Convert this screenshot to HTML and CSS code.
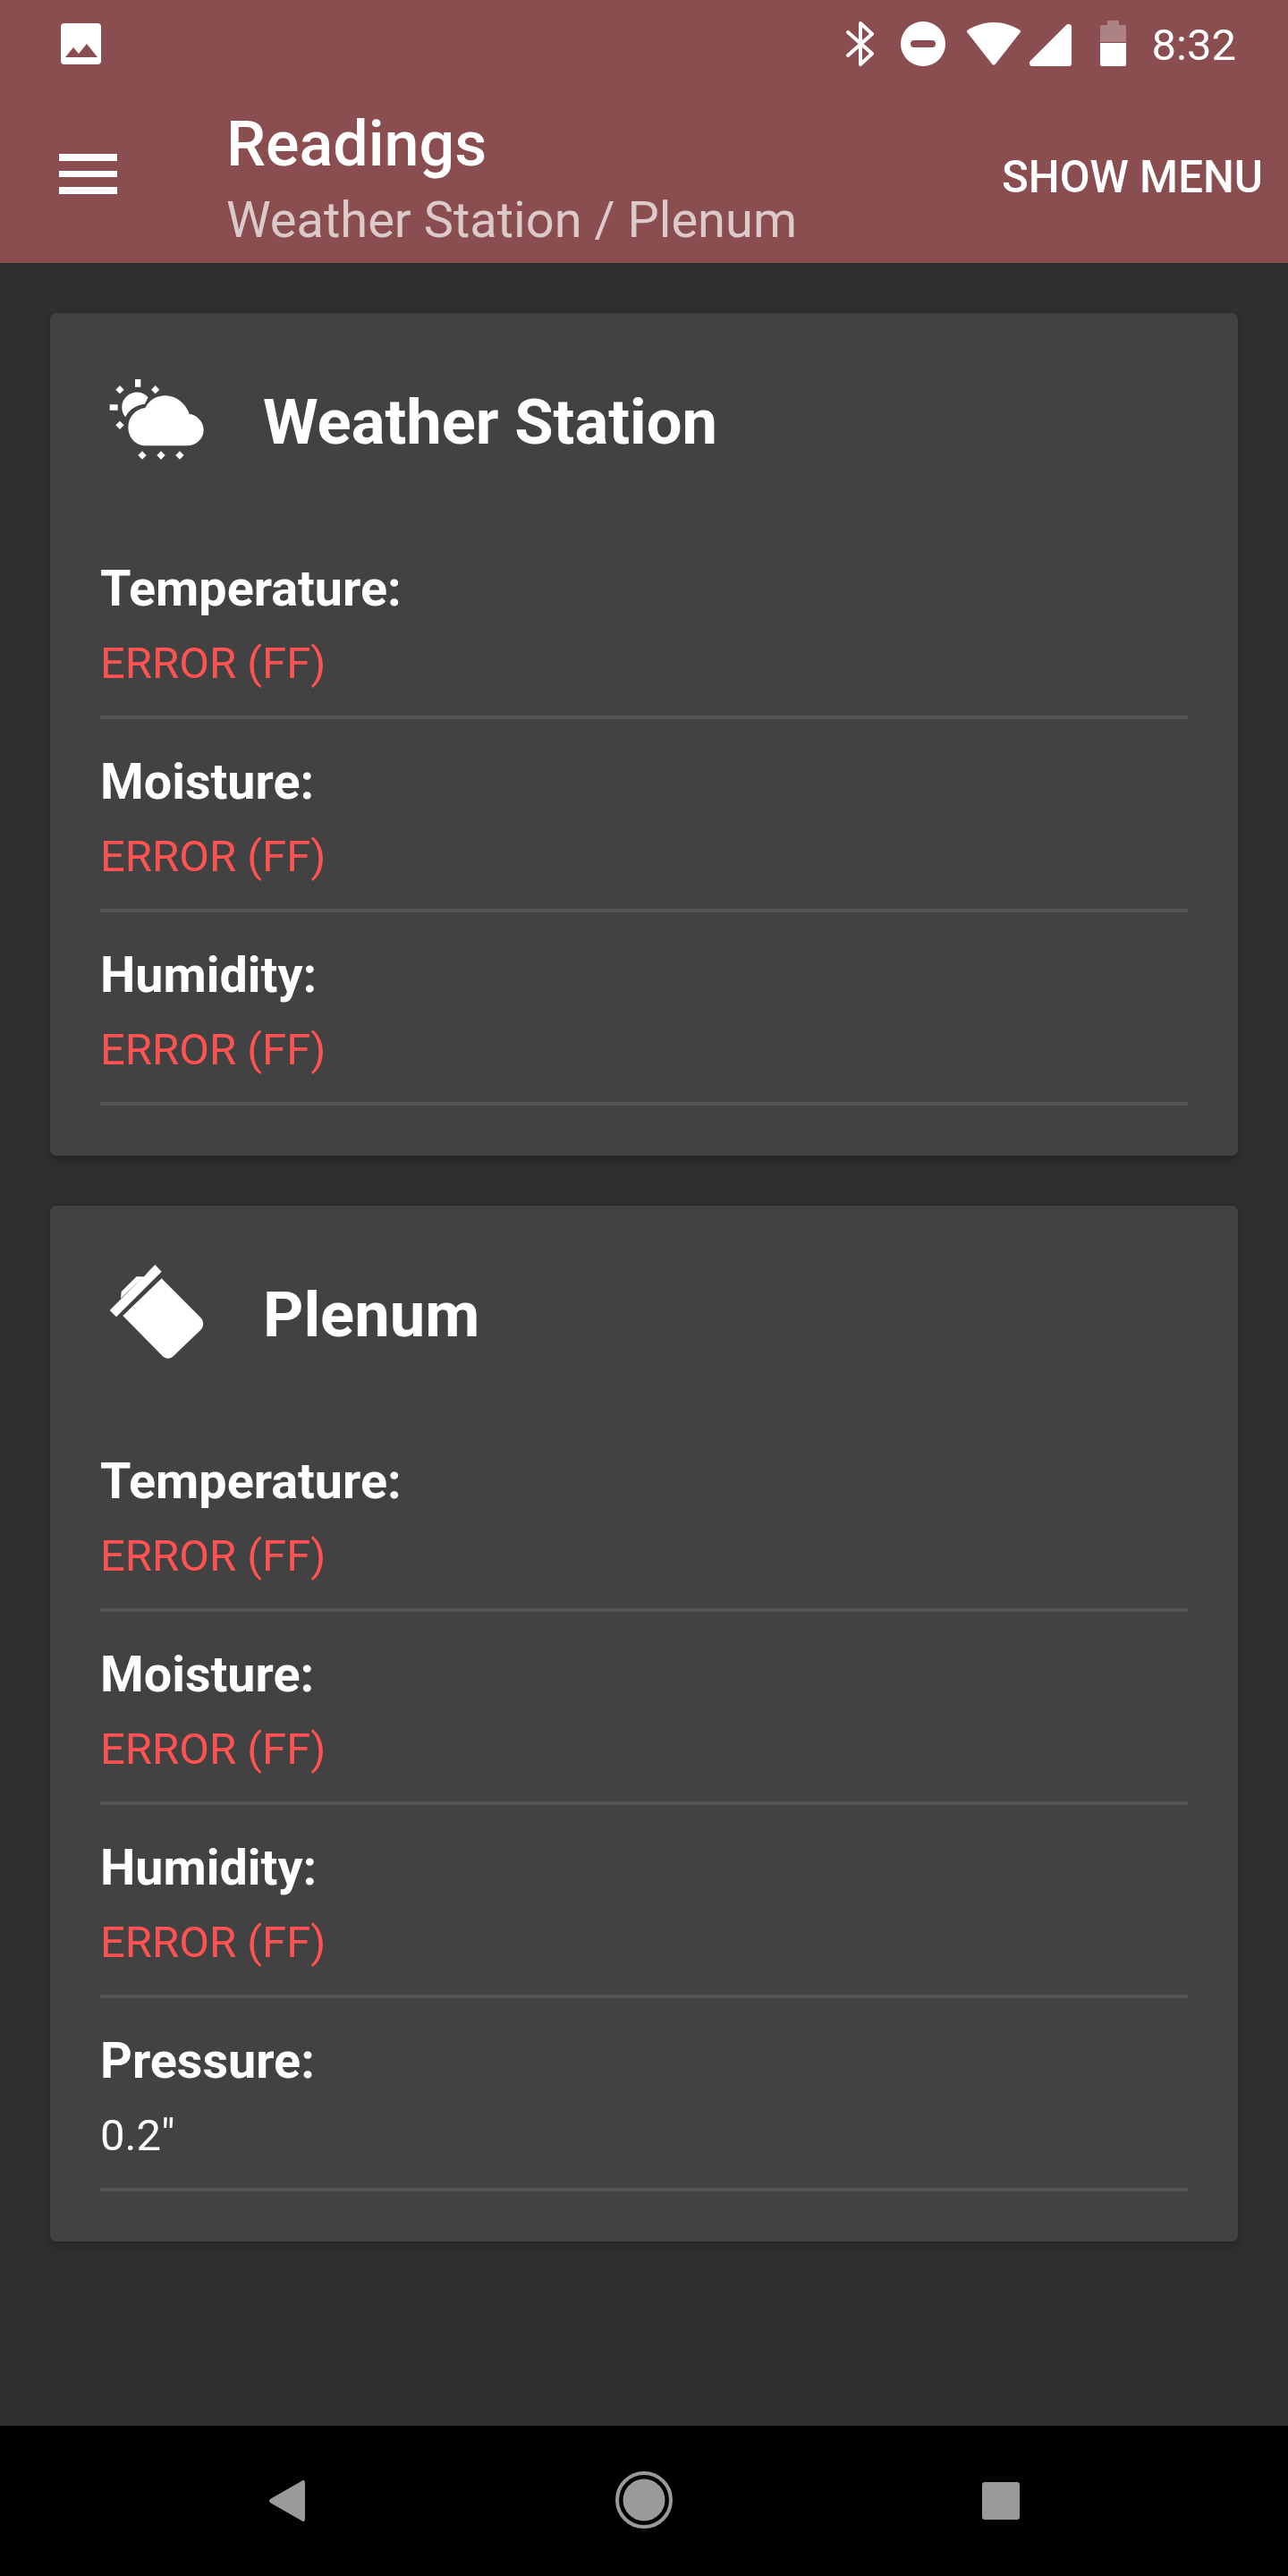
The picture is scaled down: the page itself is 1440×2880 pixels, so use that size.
FILE: index.html
```html
<!DOCTYPE html>
<html lang="en">
<head>
<meta charset="utf-8">
<title>Readings</title>
<link rel="stylesheet" href="styles.css">
</head>
<body>
<div class="screen">
  <header class="appbar">
    <div class="status">
      <svg class="ic-image" viewBox="0 0 45 46"><path fill-rule="evenodd" fill="#fff" d="M4 0H41A4 4 0 0 1 45 4V42A4 4 0 0 1 41 46H4A4 4 0 0 1 0 42V4A4 4 0 0 1 4 0ZM5 38H41L29 23 20 34 14 27Z"/></svg>
      <div class="status-right">
        <svg class="ic-bt" viewBox="0 0 31 50"><path fill="none" stroke="#fff" stroke-width="4" stroke-linecap="round" stroke-linejoin="round" d="M2 12L29 36 16 48V2L29 14 2 38"/></svg>
        <svg class="ic-dnd" viewBox="0 0 50 50"><path fill-rule="evenodd" fill="#fff" d="M25 0A25 25 0 1 1 25 50 25 25 0 0 1 25 0ZM15 21A4 4 0 0 0 15 29H35A4 4 0 0 0 35 21Z"/></svg>
        <svg class="ic-wifi" viewBox="0 0 60 49"><path fill="#fff" d="M1 13C-.5 12 -.3 10 1 9.500C10 4 20 1 30 1S50 4 59 9.500C60.300 10 60.500 12 59 13L32 47.500C31 49 29 49 28 47.500Z"/></svg>
        <svg class="ic-signal" viewBox="0 0 47 47"><path fill="#fff" d="M1 41L41 1C43 -1 47 0 47 3V44C47 46 46 47 44 47H3C0 47 -1 43 1 41Z"/></svg>
        <svg class="ic-batt" viewBox="0 0 29 51"><path fill="#fff" fill-opacity=".3" d="M8 0H21V5H27A2 2 0 0 1 29 7V24H0V7A2 2 0 0 1 2 5H8Z"/><path fill="#fff" d="M0 25H29V49A2 2 0 0 1 27 51H2A2 2 0 0 1 0 49Z"/></svg>
        <span class="clock">8:32</span>
      </div>
    </div>
    <div class="toolbar">
      <div class="burger"><span></span><span></span><span></span></div>
      <div class="titles">
        <div class="title">Readings</div>
        <div class="subtitle">Weather Station / Plenum</div>
      </div>
      <div class="action">SHOW MENU</div>
    </div>
  </header>

  <main class="content">
    <section class="card">
      <div class="card-head">
        <svg class="card-icon" viewBox="36 -12 378 378"><path fill="#fff" d="M190 265H325C360 265 383 240 383 212C383 185 362 162 335 158C322 122 290 97 255 97C225 97 200 112 187 138C155 142 130 168 130 203C130 237 155 265 190 265Z"/><path fill="#fff" d="M197 103A50 50 0 0 0 121 169C128 150 150 130 185 125Z"/><path fill="#fff" d="M153 42H172V68H153ZM68 127H95V146H68ZM102 63L116 77 102 91 88 77ZM221 63L235 77 221 91 207 77ZM102 182L116 196 102 210 88 196ZM177 283L191 297 177 311 163 297ZM240 283L254 297 240 311 226 297ZM303 283L317 297 303 311 289 297Z"/></svg>
        <h2 class="card-title">Weather Station</h2>
      </div>
      <div class="row"><div class="label">Temperature:</div><div class="value error">ERROR (FF)</div></div>
      <div class="row"><div class="label">Moisture:</div><div class="value error">ERROR (FF)</div></div>
      <div class="row"><div class="label">Humidity:</div><div class="value error">ERROR (FF)</div></div>
    </section>

    <section class="card">
      <div class="card-head">
        <svg class="card-icon" viewBox="36 12 378 378"><path fill="#fff" d="M220 42L242 65 90 217 68 195ZM105 155L107 132 158 82H183L205 58Z"/><path fill="#fff" d="M242 88L372 218C385 231 385 249 372 262L285 345C272 360 255 360 242 345L112 213Z"/></svg>
        <h2 class="card-title">Plenum</h2>
      </div>
      <div class="row"><div class="label">Temperature:</div><div class="value error">ERROR (FF)</div></div>
      <div class="row"><div class="label">Moisture:</div><div class="value error">ERROR (FF)</div></div>
      <div class="row"><div class="label">Humidity:</div><div class="value error">ERROR (FF)</div></div>
      <div class="row"><div class="label">Pressure:</div><div class="value">0.2"</div></div>
    </section>
  </main>

  <nav class="navbar">
    <svg class="nav-back" viewBox="0 0 40 46"><path fill="#9a9a9a" d="M36 1C38 -1 40 0 40 3V43C40 46 38 47 36 45L1 25C-.3 24 -.3 22 1 21Z"/></svg>
    <svg class="nav-home" viewBox="0 0 64 64"><circle cx="32" cy="32" r="30" fill="none" stroke="#9a9a9a" stroke-width="4"/><circle cx="32" cy="32" r="23.500" fill="#9a9a9a"/></svg>
    <svg class="nav-recent" viewBox="0 0 42 42"><rect width="42" height="42" rx="3" fill="#9a9a9a"/></svg>
  </nav>
</div>
</body>
</html>
```
FILE: styles.css
```css
* { box-sizing: border-box; }
html, body { margin: 0; padding: 0; }
body { font-family: Roboto, "Liberation Sans", sans-serif; background: #303030; color: #fff; }
.screen { width: 1440px; height: 2880px; display: flex; flex-direction: column; overflow: hidden; }

.appbar { height: 294px; background: #8a4d50; flex: none; }
.status { height: 84px; padding: 0 58px 0 68px; display: flex; justify-content: space-between; align-items: flex-start; }
.status-right { display: flex; align-items: flex-start; }
.ic-image { width: 45px; height: 46px; margin-top: 26px; }
.ic-bt { width: 31px; height: 50px; margin-top: 24px; }
.ic-dnd { width: 50px; height: 50px; margin: 24px 0 0 30px; }
.ic-wifi { width: 60px; height: 49px; margin: 24px 0 0 24px; }
.ic-signal { width: 47px; height: 47px; margin: 27px 0 0 10px; }
.ic-batt { width: 29px; height: 51px; margin: 23px 0 0 32px; }
.clock { font-size: 49px; line-height: 58px; margin: 22px 0 0 29px; }

.toolbar { height: 210px; display: flex; align-items: flex-start; padding: 0 28px 0 66px; }
.burger { width: 65px; margin-top: 88px; display: flex; flex-direction: column; gap: 11px; flex: none; }
.burger span { height: 7.500px; background: #fff; display: block; }
.titles { margin-left: 122px; flex: 1; padding-top: 36px; }
.title { font-size: 70px; font-weight: 500; line-height: 82px; }
.subtitle { font-size: 56px; line-height: 66px; margin-top: 11px; color: rgba(255,255,255,.7); }
.action { font-size: 49.200px; font-weight: 500; line-height: 58px; margin-top: 85px; }

.content { flex: 1; padding: 56px; display: flex; flex-direction: column; gap: 56px; }
.card { background: #424242; border-radius: 7px; padding: 0 56px 56px; box-shadow: 0 7px 14px rgba(0,0,0,.2), 0 0 4px rgba(0,0,0,.12); }
.card-head { height: 238px; display: flex; align-items: flex-start; padding-top: 56px; }
.card-icon { width: 126px; height: 126px; flex: none; }
.card-title { margin: 0 0 0 56px; font-size: 70.500px; font-weight: 700; line-height: 82px; padding-top: 25px; }

.row { height: 216px; border-bottom: 4px solid #555; padding-top: 37px; }
.label { font-size: 55.700px; font-weight: 700; line-height: 66px; }
.value { font-size: 49px; line-height: 58px; margin-top: 22px; }
.error { color: #ff5252; }

.navbar { height: 168px; background: #000; flex: none; display: flex; align-items: flex-start; padding-left: 301px; }
.nav-back { width: 40px; height: 46px; margin-top: 61px; }
.nav-home { width: 64px; height: 64px; margin: 51px 0 0 347px; }
.nav-recent { width: 42px; height: 42px; margin: 63px 0 0 346px; }
```
